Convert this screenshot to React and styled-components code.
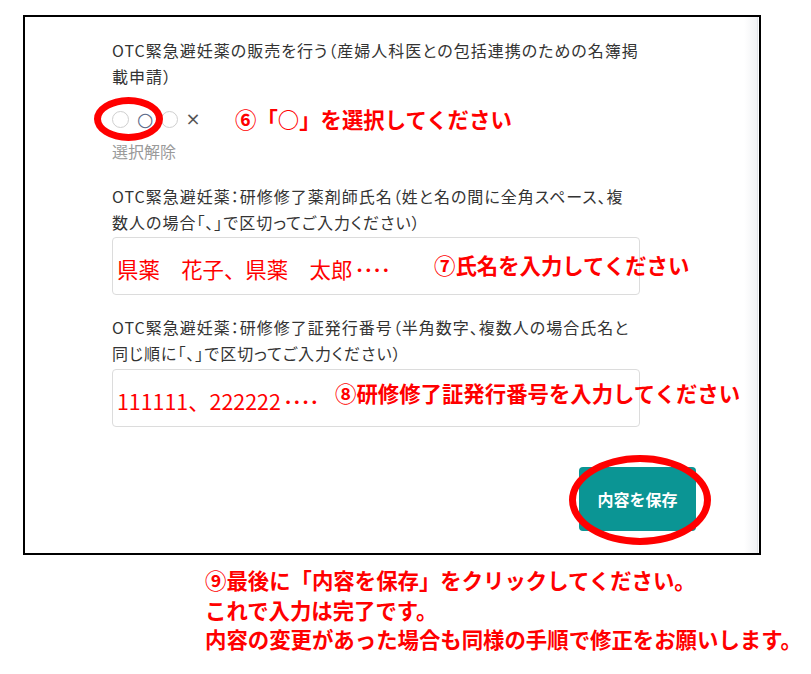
import {createGlobalStyle, styled} from 'styled-components';

const GlobalStyle = createGlobalStyle`
  body {
    margin: 0;
    background: #fff;
    font-family: "Noto Sans CJK JP", "Noto Sans", sans-serif;
  }
`

const Frame = styled.div`
  display: flex;
  width: 738px;
  margin: 15px 0 0 23px;
  border: 2px solid #000;
  box-sizing: border-box;
  background: #fff;
`

const Panel = styled.div`
  flex: 1;
  padding: 21px 0 22px 87px;
`

// ブラウザのスクロールバー跡のような右端の薄いグレー
const ScrollEdge = styled.div`
  width: 13px;
  background: linear-gradient(to right, #ffffff, #f1f2f4);
  border-right: 1px solid #e1e4e9;
  margin-right: 1px;
`

const Field = styled.div`
  width: 528px;
  margin-top: ${({$gap}) => $gap || 0}px;
`

const Label = styled.div`
  width: 528px;
  font-size: 16px;
  line-height: 25.5px;
  letter-spacing: 1px;
  color: #333;
  font-feature-settings: "palt";
`

const ChoiceRow = styled.div`
  position: relative;
  display: flex;
  align-items: center;
  height: 24px;
  margin-top: 18px;
`

const Radio = styled.input.attrs({type: 'radio'})`
  appearance: none;
  width: 17px;
  height: 17px;
  margin: 0 8px 0 0;
  border: 1px solid #cfcfcf;
  border-radius: 50%;
  background: #fff;
`

const ChoiceText = styled.span`
  font-family: "DejaVu Sans", sans-serif;
  font-size: ${({$size}) => $size}px;
  line-height: 24px;
  color: ${({$color}) => $color};
  margin-right: ${({$after}) => $after || 0}px;
`

const Clear = styled.div`
  margin-top: 8px;
  font-size: 16px;
  line-height: 25px;
  color: #9a9a9a;
`

const InputBox = styled.div`
  position: relative;
  display: flex;
  align-items: center;
  height: 58px;
  margin-top: ${({$gap}) => $gap}px;
  padding: 4px 0 0 4px;
  box-sizing: border-box;
  border: 1px solid #dcdcdc;
  border-radius: 4px;
`

const Typed = styled.span`
  font-size: 21.4px;
  color: #ff0000;
  white-space: nowrap;
`

const Dots = styled.span`
  letter-spacing: -2px;
  margin-left: 2px;
`

const Note = styled.span`
  position: absolute;
  left: ${({$x}) => $x}px;
  top: ${({$y}) => $y}px;
  font-size: 21.4px;
  font-weight: 700;
  line-height: 28px;
  color: #ff0000;
  white-space: nowrap;
`

const Ring = styled.span`
  position: absolute;
  left: ${({$x}) => $x}px;
  top: ${({$y}) => $y}px;
  width: ${({$w}) => $w}px;
  height: ${({$h}) => $h}px;
  box-sizing: border-box;
  border: 7px solid #ff0000;
  border-radius: 50%;
  pointer-events: none;
`

const Actions = styled.div`
  display: flex;
  justify-content: flex-end;
  margin-top: 40px;
  padding-right: 48px;
`

const SaveWrap = styled.div`
  position: relative;
`

const SaveButton = styled.button`
  display: block;
  width: 117px;
  height: 64px;
  border: none;
  border-radius: 4px;
  background: #0b9594;
  color: #fff;
  font-family: inherit;
  font-size: 16px;
  font-weight: 700;
`

const Guide = styled.div`
  margin-top: 10px;
  padding-left: 205px;
  font-size: 21.4px;
  font-weight: 700;
  line-height: 29.5px;
  color: #ff0000;
  white-space: nowrap;
`

export default function App(){
  return(
    <>
      <GlobalStyle />
      <Frame>
        <Panel>
          <Field>
            <Label>OTC緊急避妊薬の販売を行う（産婦人科医との包括連携のための名簿掲載申請）</Label>
            <ChoiceRow>
              <Radio name="otc" />
              <ChoiceText $size={19} $color="#5d6a88" $after={7}>○</ChoiceText>
              <Radio name="otc" />
              <ChoiceText $size={18} $color="#555">×</ChoiceText>
              <Ring $x={-18} $y={-10} $w={69} $h={44} />
              <Note $x={123} $y={-2}>⑥「○」を選択してください</Note>
            </ChoiceRow>
            <Clear>選択解除</Clear>
          </Field>

          <Field $gap={20}>
            <Label>OTC緊急避妊薬：研修修了薬剤師氏名（姓と名の間に全角スペース、複数人の場合「、」で区切ってご入力ください）</Label>
            <InputBox $gap={2}>
              <Typed>県薬　花子、県薬　太郎<Dots>････</Dots></Typed>
              <Note $x={321} $y={13}>⑦氏名を入力してください</Note>
            </InputBox>
          </Field>

          <Field $gap={20}>
            <Label>OTC緊急避妊薬：研修修了証発行番号（半角数字、複数人の場合氏名と同じ順に「、」で区切ってご入力ください）</Label>
            <InputBox $gap={3}>
              <Typed>111111、222222<Dots>････</Dots></Typed>
              <Note $x={222} $y={9}>⑧研修修了証発行番号を入力してください</Note>
            </InputBox>
          </Field>

          <Actions>
            <SaveWrap>
              <SaveButton type="button">内容を保存</SaveButton>
              <Ring $x={-10} $y={-12} $w={142} $h={90} />
            </SaveWrap>
          </Actions>
        </Panel>
        <ScrollEdge />
      </Frame>

      <Guide>
        ⑨最後に「内容を保存」をクリックしてください。<br />
        これで入力は完了です。<br />
        内容の変更があった場合も同様の手順で修正をお願いします。
      </Guide>
    </>
  )
}
